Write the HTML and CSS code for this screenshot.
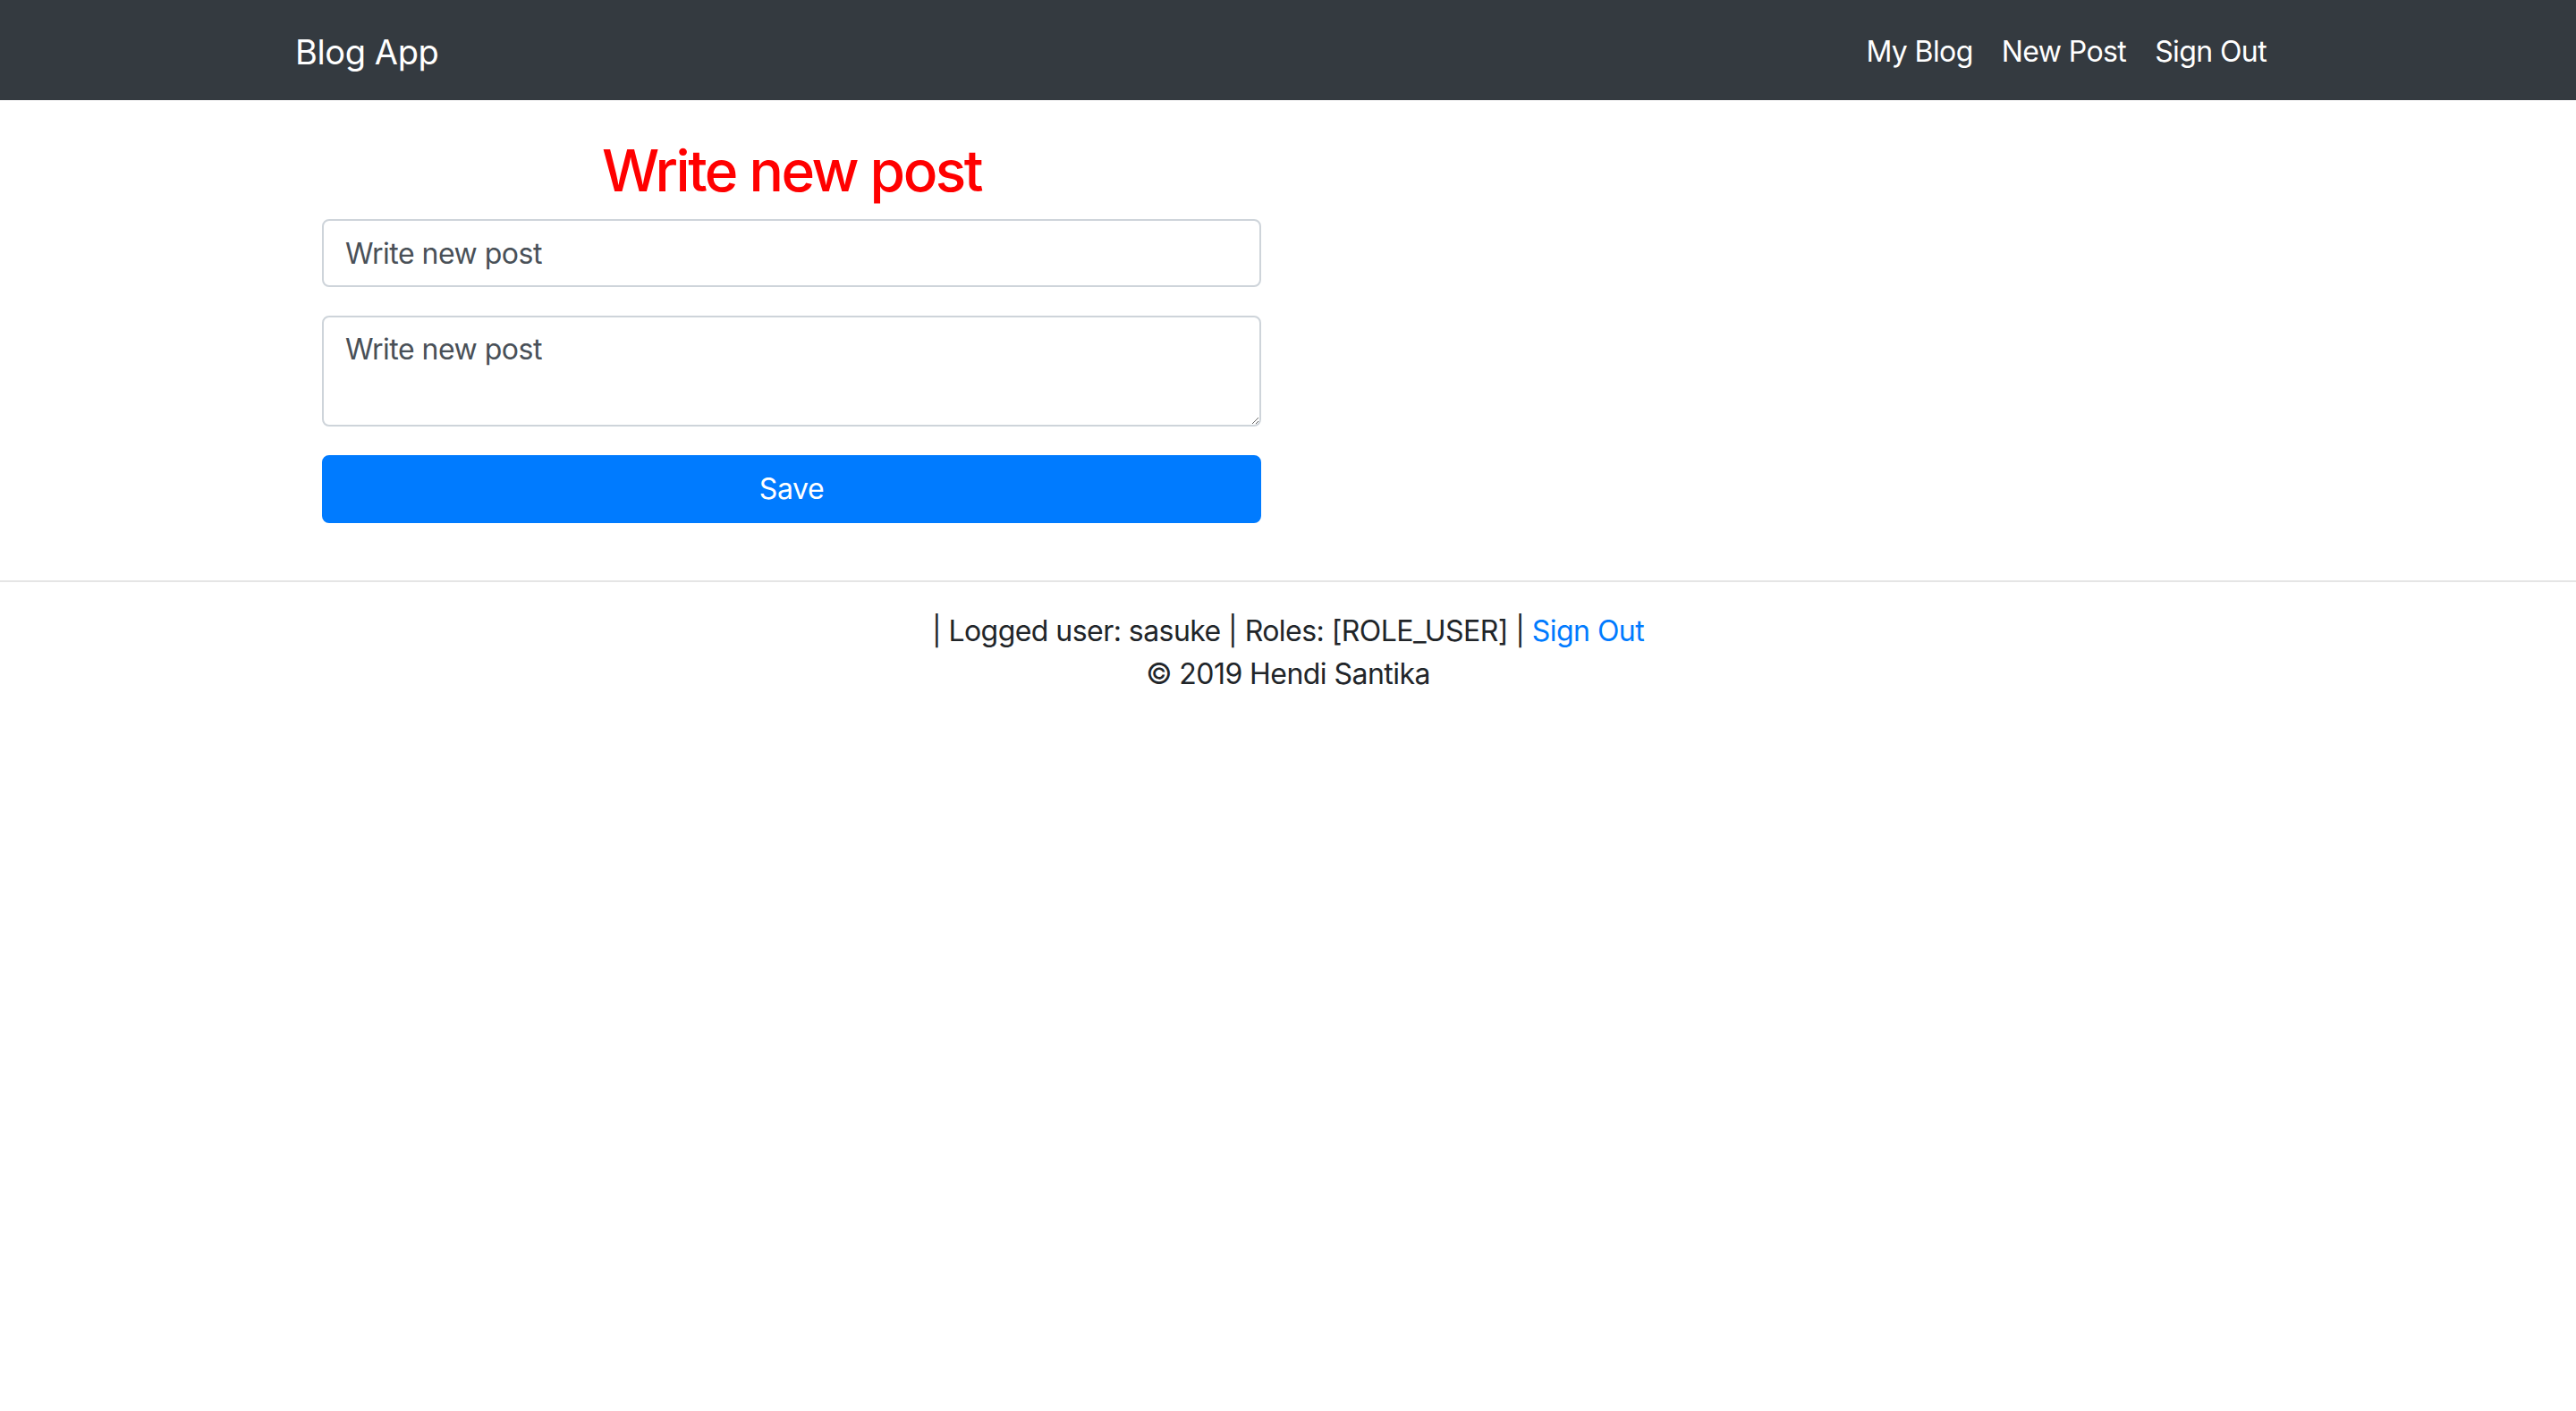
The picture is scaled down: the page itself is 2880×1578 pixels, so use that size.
FILE: index.html
```html
<!DOCTYPE html>
<html lang="en">
<head>
<meta charset="utf-8">
<title>Blog App</title>
<link rel="stylesheet" href="styles.css">
</head>
<body>
<nav class="navbar">
  <div class="container nav-inner">
    <a class="brand" href="#">Blog App</a>
    <ul class="nav-links">
      <li><a class="nav-link" href="#">My Blog</a></li>
      <li><a class="nav-link" href="#">New Post</a></li>
      <li><a class="nav-link" href="#">Sign Out</a></li>
    </ul>
  </div>
</nav>
<main class="container main">
  <form class="post-form">
    <h2 class="title">Write new post</h2>
    <div class="form-group">
      <input class="form-control" type="text" placeholder="Write new post">
    </div>
    <div class="form-group">
      <textarea class="form-control textarea" rows="2" placeholder="Write new post"></textarea>
    </div>
    <button class="btn-save" type="button">Save</button>
  </form>
</main>
<hr class="divider">
<footer class="footer">
  <div>| Logged user: sasuke | Roles: [ROLE_USER] | <a class="footer-link" href="#">Sign Out</a></div>
  <div>© 2019 Hendi Santika</div>
</footer>
</body>
</html>
```
FILE: styles.css
```css
* { box-sizing: border-box; }
html, body {
  margin: 0;
  padding: 0;
  background: #fff;
}
body {
  font-family: Inter, "Liberation Sans", Arial, sans-serif;
  font-size: 32px;
  line-height: 48px;
  color: #212529;
  letter-spacing: -0.4px;
}
a { text-decoration: none; }

.container {
  width: 2280px;
  margin: 0 auto;
  padding: 0 30px;
}

.navbar {
  background: #343a40;
  height: 112px;
  padding: 18px 0 14px;
}
.nav-inner {
  height: 80px;
  display: flex;
  align-items: center;
  justify-content: space-between;
}
.brand {
  color: #fff;
  font-size: 38px;
  line-height: 60px;
}
.nav-links {
  list-style: none;
  margin: 0;
  padding: 0;
  display: flex;
}
.nav-link {
  display: block;
  color: #fff;
  padding: 16px 16px;
  font-size: 32px;
  line-height: 48px;
  letter-spacing: -0.6px;
}

.main {
  padding-top: 40px;
}
.post-form {
  width: 1050px;
  margin-left: 30px;
}
.title {
  margin: 0 0 16px;
  text-align: center;
  color: #ff0000;
  font-size: 64px;
  line-height: 77px;
  font-weight: 500;
  letter-spacing: -2.5px;
}
.form-group {
  margin-bottom: 32px;
}
.form-control {
  display: block;
  width: 100%;
  height: 76px;
  padding: 12px 24px;
  font-family: inherit;
  font-size: 32px;
  line-height: 48px;
  letter-spacing: -0.5px;
  color: #495057;
  background: #fff;
  border: 2px solid #ced4da;
  border-radius: 8px;
  outline: none;
}
.form-control::placeholder {
  color: #495057;
  opacity: 1;
}
.textarea {
  height: 124px;
  resize: vertical;
}
.btn-save {
  display: block;
  width: 100%;
  height: 76px;
  padding: 12px 24px;
  font-family: inherit;
  font-size: 32px;
  line-height: 48px;
  letter-spacing: -0.4px;
  color: #fff;
  background: #007bff;
  border: 2px solid #007bff;
  border-radius: 8px;
}

.divider {
  margin: 64px 0 31px;
  border: 0;
  border-top: 2px solid rgba(0, 0, 0, 0.1);
}
.footer {
  text-align: center;
  letter-spacing: -0.55px;
}
.footer-link {
  color: #007bff;
}
```
